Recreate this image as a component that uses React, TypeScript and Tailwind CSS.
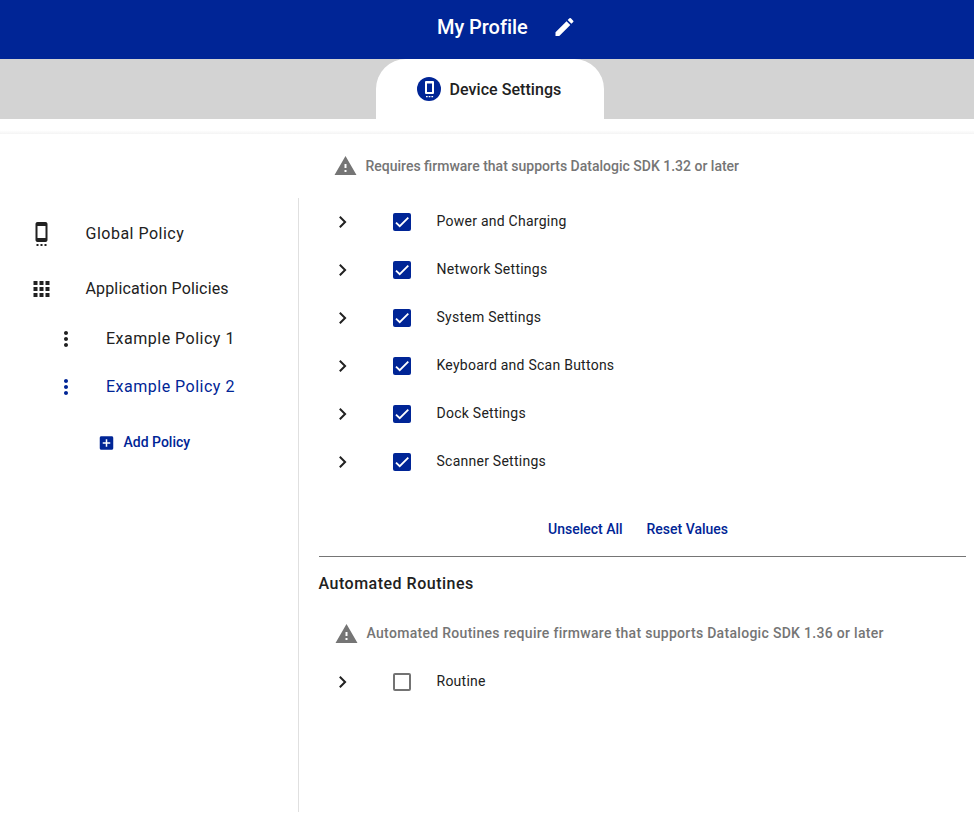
import React from "react";

const paths = {
  pencil:
    "M3 17.25V21h3.75L17.81 9.94l-3.75-3.75L3 17.25zM20.71 7.04a.996.996 0 0 0 0-1.41l-2.34-2.34a.996.996 0 0 0-1.41 0l-1.83 1.83 3.75 3.75 1.83-1.83z",
  device:
    "M7 24h2v-2H7v2zm4 0h2v-2h-2v2zm4 0h2v-2h-2v2zM16 .01L8 0C6.9 0 6 .9 6 2v16c0 1.1.9 2 2 2h8c1.1 0 2-.9 2-2V2c0-1.1-.9-1.99-2-1.99zM16 16H8V4h8v12z",
  apps:
    "M4 8h4V4H4v4zm6 12h4v-4h-4v4zm-6 0h4v-4H4v4zm0-6h4v-4H4v4zm6 0h4v-4h-4v4zm6-10v4h4V4h-4zm-6 4h4V4h-4v4zm6 6h4v-4h-4v4zm0 6h4v-4h-4v4z",
  more:
    "M12 8c1.1 0 2-.9 2-2s-.9-2-2-2-2 .9-2 2 .9 2 2 2zm0 2c-1.1 0-2 .9-2 2s.9 2 2 2 2-.9 2-2-.9-2-2-2zm0 6c-1.1 0-2 .9-2 2s.9 2 2 2 2-.9 2-2-.9-2-2-2z",
  add:
    "M19 3H5c-1.11 0-2 .9-2 2v14c0 1.1.89 2 2 2h14c1.1 0 2-.9 2-2V5c0-1.1-.9-2-2-2zm-2 10h-4v4h-2v-4H7v-2h4V7h2v4h4v2z",
  chevron: "M10 6L8.59 7.41 13.17 12l-4.58 4.59L10 18l6-6z",
  warning: "M1 21h22L12 2 1 21zm12-3h-2v-2h2v2zm0-4h-2v-4h2v4z",
};

function Icon({
  name,
  className,
  viewBox = "0 0 24 24",
}: {
  name: keyof typeof paths;
  className: string;
  viewBox?: string;
}) {
  return (
    <svg viewBox={viewBox} fill="currentColor" className={`shrink-0 overflow-visible ${className}`}>
      <path d={paths[name]} />
    </svg>
  );
}

function Checkbox({ checked }: { checked: boolean }) {
  return checked ? (
    <span className="mt-[15px] ml-[38.5px] flex size-[18px] shrink-0 items-center justify-center rounded-[2px] bg-[#002596]">
      <svg viewBox="0 0 24 24" className="size-[14px]" fill="none" stroke="white" strokeWidth="3.12">
        <path d="M1.73 12.91 8.1 19.28 22.79 4.59" />
      </svg>
    </span>
  ) : (
    <span className="mt-[15px] ml-[38.5px] size-[18px] shrink-0 rounded-[2px] border-2 border-[#737373]" />
  );
}

function SettingRow({ label, checked }: { label: string; checked: boolean }) {
  return (
    <div className="flex h-12 items-start pl-[31.5px]">
      <Icon name="chevron" viewBox="0.5 0 24 24" className="mt-3 size-6" />
      <Checkbox checked={checked} />
      <span className="mt-[13px] ml-[25.5px] text-sm leading-5 tracking-[0.25px]">{label}</span>
    </div>
  );
}

const settings = [
  "Power and Charging",
  "Network Settings",
  "System Settings",
  "Keyboard and Scan Buttons",
  "Dock Settings",
  "Scanner Settings",
];

export default function App() {
  return (
    <div className="h-[823px] w-[974px] overflow-hidden bg-white font-['Roboto',sans-serif] text-[#212121]">
      <header className="flex h-[59px] items-start bg-[#002596] pl-[437px] text-white">
        <h1 className="mt-[13px] w-[115.5px] text-xl leading-7 font-medium tracking-[-0.05px]">My Profile</h1>
        <Icon name="pencil" viewBox="0.5 0 24 24" className="mt-[15px] size-6" />
      </header>
      <div className="flex h-[60px] bg-[#d3d3d3] pl-[376px]">
        <div className="flex w-[228px] items-start rounded-t-[30px] bg-white pt-[18px] pl-[41px]">
          <svg viewBox="0 0 24 24" className="size-6 shrink-0">
            <circle cx="12" cy="12" r="12" fill="#002596" />
            <path
              fill="white"
              fillRule="evenodd"
              d="M9 4h7a1 1 0 0 1 1 1v11a1 1 0 0 1-1 1H9a1 1 0 0 1-1-1V5a1 1 0 0 1 1-1zm1 2.4v8.6h5V6.4h-5z"
            />
            <path fill="white" d="M9 19h1.7v1.2H9zM11.7 19h1.7v1.2h-1.7zM14.4 19h1.7v1.2h-1.7z" />
          </svg>
          <span className="mt-px ml-[8.5px] text-base leading-6 font-medium tracking-[0.05px]">Device Settings</span>
        </div>
      </div>
      <div className="h-[15px] bg-linear-to-b from-white from-75% to-[#f4f4f4]" />

      <div className="flex">
        <aside className="mt-16 h-[614px] w-[299px] shrink-0 border-r border-[#e0e0e0] text-base leading-6 tracking-[0.5px]">
          <div className="mt-6 flex h-6 pl-[29.5px]">
            <Icon name="device" viewBox="0.5 0 24 24" className="size-6" />
            <span className="ml-8">Global Policy</span>
          </div>
          <div className="mt-[31px] flex h-6 pl-[29.5px]">
            <Icon name="apps" viewBox="0.5 0 24 24" className="size-6" />
            <span className="ml-8 tracking-[0.15px]">Application Policies</span>
          </div>
          <div className="mt-[26px] flex h-6 pl-[54px]">
            <Icon name="more" className="size-6" />
            <span className="ml-7">Example Policy 1</span>
          </div>
          <div className="mt-6 flex h-6 pl-[54px] text-[#002596]">
            <Icon name="more" className="size-6" />
            <span className="ml-7">Example Policy 2</span>
          </div>
          <div className="mt-[33px] flex pl-[97.5px] text-[#002596]">
            <Icon name="add" viewBox="0.67 0 24 24" className="mt-[2px] size-[18px]" />
            <span className="ml-2 text-sm leading-5 font-medium tracking-normal">Add Policy</span>
          </div>
        </aside>

        <main className="flex-1">
          <div className="flex h-16 pt-[21px] pl-[34.5px] text-[#757575]">
            <Icon name="warning" viewBox="0.5 0 24 24" className="-mt-[1px] size-6" />
            <span className="ml-2 text-sm leading-[22px] font-medium">
              Requires firmware that supports Datalogic SDK 1.32 or later
            </span>
          </div>
          {settings.map((label) => (
            <SettingRow key={label} label={label} checked />
          ))}
          <div className="mr-2 ml-5 flex h-[71px] border-b border-[#757575] pt-[33px] pl-[229px] text-sm leading-5 font-medium text-[#002596]">
            <span className="w-[98.5px]">Unselect All</span>
            <span>Reset Values</span>
          </div>
          <h2 className="mt-[15px] ml-[19.5px] text-base leading-6 font-medium tracking-[0.5px]">Automated Routines</h2>
          <div className="mt-[26px] mb-3 flex h-6 pl-[35.5px] text-[#757575]">
            <Icon name="warning" viewBox="0.5 0 24 24" className="size-6" />
            <span className="-mt-px ml-2 text-sm leading-6 font-medium tracking-[0.3px]">
              Automated Routines require firmware that supports Datalogic SDK 1.36 or later
            </span>
          </div>
          <SettingRow label="Routine" checked={false} />
        </main>
      </div>
    </div>
  );
}
